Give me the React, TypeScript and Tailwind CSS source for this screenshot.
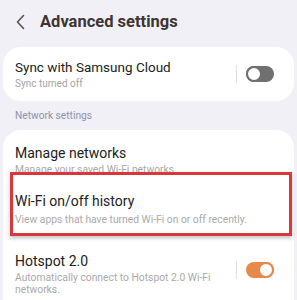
const font = { fontFamily: "Roboto, 'Noto Sans', Arial, sans-serif" };

function Toggle({ on }: { on: boolean }) {
  return (
    <div className="flex items-center gap-[9px]">
      <div className="w-px h-[18px] bg-[#e2e2e6]" />
      <div
        className={
          on
            ? "w-[28px] h-[16px] rounded-full bg-[#e8894a] flex items-center justify-end"
            : "w-[28px] h-[16px] rounded-full bg-[#707070] flex items-center justify-start"
        }
      >
        <div
          className={
            on
              ? "w-[16px] h-[16px] rounded-full bg-white border-[2px] border-[#e8894a]"
              : "w-[16px] h-[16px] rounded-full bg-white border-[2px] border-[#707070]"
          }
        />
      </div>
    </div>
  );
}

export default function App() {
  return (
    <main
      className="w-[297px] h-[300px] overflow-hidden bg-[#f0f0f6] flex flex-col"
      style={font}
    >
      <header className="h-[47px] flex items-center pl-[15px] gap-[14px] pb-[3px]">
        <svg width="11" height="16" viewBox="0 0 11 16" fill="none">
          <path
            d="M8.5 1.5 L2.5 8 L8.5 14.5"
            stroke="#5a5150"
            strokeWidth="1.6"
            strokeLinecap="round"
            strokeLinejoin="round"
          />
        </svg>
        <h1 className="text-[16.5px] font-bold text-[#3e3431]">
          Advanced settings
        </h1>
      </header>

      <section className="mx-[3px] h-[54px] bg-white rounded-[18px] flex items-center justify-between pl-[12px] pr-[20px]">
        <div className="flex flex-col">
          <span className="text-[13.5px] leading-[18px] text-[#222]">
            Sync with Samsung Cloud
          </span>
          <span className="text-[10px] leading-[15px] text-[#a4a4a4]">
            Sync turned off
          </span>
        </div>
        <Toggle on={false} />
      </section>

      <p className="h-[29px] flex items-center pl-[15px] text-[10.2px] text-[#8e92aa]">
        Network settings
      </p>

      <section className="mx-[3px] flex-1 bg-white rounded-t-[18px] flex flex-col">
        <div className="pt-[14px] pl-[12px] h-[46px]">
          <div className="text-[14px] leading-[18px] text-[#222]">
            Manage networks
          </div>
          <div className="mt-[1px] text-[10.3px] leading-[14px] text-[#aaa]">
            Manage your saved Wi-Fi networks.
          </div>
        </div>

        <div className="relative pt-[16px] pl-[12px] h-[62px]">
          <div className="text-[14px] leading-[18px] text-[#222]">
            Wi-Fi on/off history
          </div>
          <div className="mt-[3px] text-[10.3px] leading-[14px] text-[#aaa]">
            View apps that have turned Wi-Fi on or off recently.
          </div>
          <div className="absolute left-[7px] right-[2px] top-[-4px] h-[64px] border-[3px] border-[#d8383c] shadow-[0_2px_4px_rgba(0,0,0,0.25)]" />
        </div>

        <div className="pt-[14px] pl-[12px] pr-[20px] flex justify-between">
          <div className="flex flex-col">
            <span className="text-[14px] leading-[18px] text-[#222]">
              Hotspot 2.0
            </span>
            <span className="text-[10.3px] leading-[12px] text-[#aaa] w-[210px] mt-[2px]">
              Automatically connect to Hotspot 2.0 Wi-Fi networks.
            </span>
          </div>
          <div className="pt-[9px]">
            <Toggle on={true} />
          </div>
        </div>
      </section>
    </main>
  );
}
